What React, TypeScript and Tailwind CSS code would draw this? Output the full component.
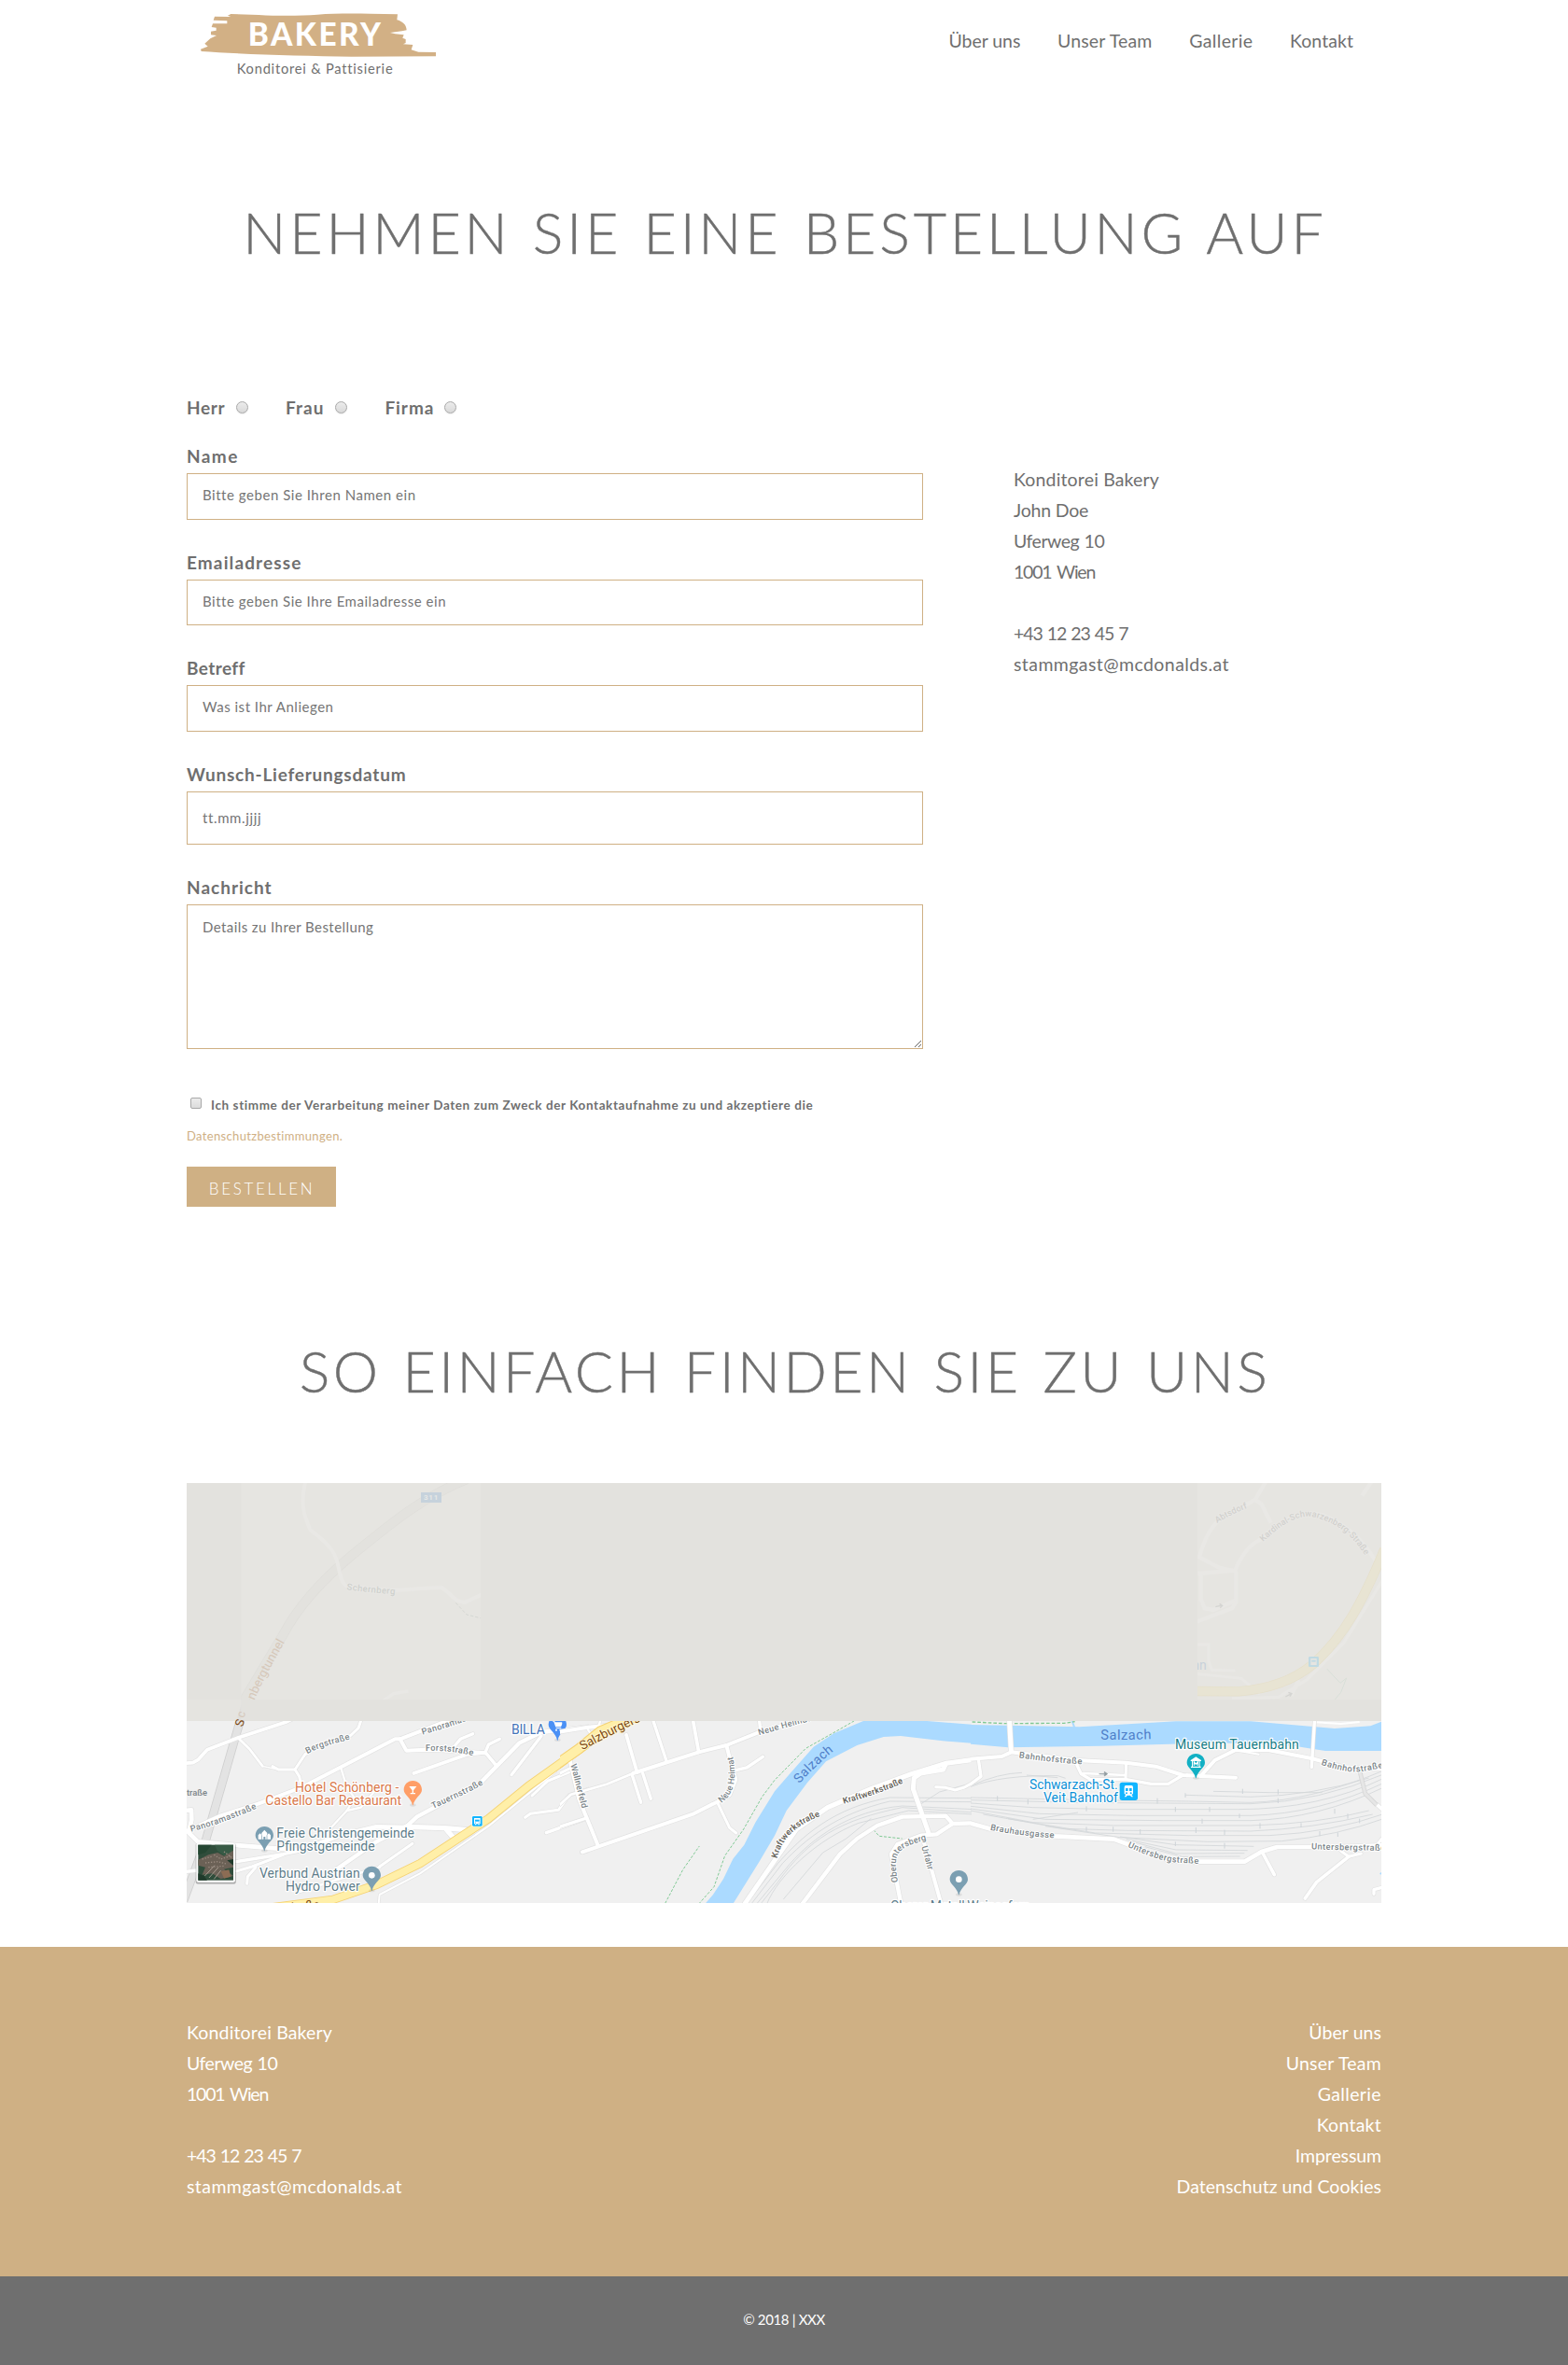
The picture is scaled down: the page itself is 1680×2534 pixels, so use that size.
import React from "react";

type Item = { text: string; track: string };

const NAV: Item[] = [
  { text: "Über uns", track: "tracking-[-0.05px]" },
  { text: "Unser Team", track: "tracking-[0.16px]" },
  { text: "Gallerie", track: "tracking-[0.33px]" },
  { text: "Kontakt", track: "tracking-[0.06px]" },
];

const CONTACT: Item[] = [
  { text: "Konditorei Bakery", track: "tracking-[0.16px]" },
  { text: "John Doe", track: "tracking-[-0.2px]" },
  { text: "Uferweg 10", track: "tracking-[-0.5px] [word-spacing:1px]" },
  { text: "1001 Wien", track: "tracking-[-1.2px] [word-spacing:2px]" },
  { text: "\u00a0", track: "" },
  { text: "+43 12 23 45 7", track: "tracking-[-1.1px] [word-spacing:1.2px]" },
  { text: "stammgast@mcdonalds.at", track: "tracking-[0.42px]" },
];

const FOOTER_LINKS: Item[] = [
  { text: "Über uns", track: "tracking-[0.05px]" },
  { text: "Unser Team", track: "tracking-[0.24px]" },
  { text: "Gallerie", track: "tracking-[0.35px]" },
  { text: "Kontakt", track: "tracking-[0.25px]" },
  { text: "Impressum", track: "tracking-[-0.1px]" },
  { text: "Datenschutz und Cookies", track: "tracking-[0.04px]" },
];

function Logo() {
  return (
    <svg className="h-[100px] w-[300px]" viewBox="0 0 900 300">
      <path
        fill="#d2b085"
        d="M162 50 L172 45 L262 48 C330 52 400 51 450 47 C500 43 560 43 620 44 L708 46 L706 64 C722 68 736 78 737 97 L722 100 L684 105 L700 109 L728 112 L724 122 L734 126 L734 138 L726 142 L757 144 L752 160 L775 167 L831 168 L831 181 L560 182 C400 180 200 174 77 165 L75 158 L98 149 L88 140 L106 124 L126 114 L108 112 L108 101 L125 98 L125 89 L110 87 L114 76 L160 76 L160 67 L116 65 L120 53 L172 54 Z"
      />
      <text x="227" y="147" fill="#fff" fontFamily="Lato" fontWeight="900" fontSize="100" textLength="427">
        BAKERY
      </text>
      <text className="[font-variant-ligatures:none]" x="191" y="238" fill="#6f6f6f" fontFamily="Lato" fontSize="44" textLength="501">
        Konditorei &amp; Pattisierie
      </text>
    </svg>
  );
}

function Radio({ label, track, gap }: { label: string; track: string; gap: string }) {
  return (
    <label className={"flex items-center " + gap}>
      <span className={"pt-px text-[19px] leading-[33px] font-bold " + track}>{label}</span>
      <input
        type="radio"
        name="anrede"
        className="size-[13px] appearance-none rounded-full border border-[#a8a8a8] bg-linear-to-b from-[#ececec] to-[#d9d9d9] shadow-[0_1px_1px_#00000014]"
      />
    </label>
  );
}

function Field({ label, track, children }: { label: string; track: string; children: React.ReactNode }) {
  return (
    <div className="mb-7 flex flex-col">
      <label className={"mb-[2px] pt-px text-[19px] leading-[33px] font-bold " + track}>{label}</label>
      {children}
    </div>
  );
}

const INPUT =
  "block w-full rounded-none border border-[#cfb084] bg-white px-[16px] pb-[3px] text-[15px] text-[#757575] placeholder:text-[#757575] outline-none";

/* Roads: light casing under a white core. */
function Roads({ items }: { items: [string, number][] }) {
  return (
    <g fill="none" strokeLinecap="round" strokeLinejoin="round">
      {items.map(([d, w], i) => (
        <path key={i} d={d} stroke="#e2e2e2" strokeWidth={w + 4} />
      ))}
      {items.map(([d, w], i) => (
        <path key={i} d={d} stroke="#fff" strokeWidth={w} />
      ))}
    </g>
  );
}

function Street({
  id,
  d,
  size = 28,
  fill = "#7b8488",
  halo = "#fff",
  weight = 500,
  spacing = 0,
  children,
}: {
  id: string;
  d: string;
  size?: number;
  fill?: string;
  halo?: string;
  weight?: number;
  spacing?: number;
  children: string;
}) {
  return (
    <>
      <path id={id} d={d} fill="none" />
      <text
        fontSize={size}
        fontWeight={weight}
        fill={fill}
        stroke={halo}
        strokeWidth={halo === "none" ? 0 : 6}
        strokeLinejoin="round"
        paintOrder="stroke"
        letterSpacing={spacing}
      >
        <textPath href={"#" + id}>{children}</textPath>
      </text>
    </>
  );
}

function Poi({ x, y, len, fill, children }: { x: number; y: number; len?: number; fill: string; children: string }) {
  return (
    <text
      x={x}
      y={y}
      fontSize="42"
      fill={fill}
      stroke="#fff"
      strokeWidth="7"
      strokeLinejoin="round"
      paintOrder="stroke"
      textLength={len}
    >
      {children}
    </text>
  );
}

function Pin({ x, y, fill, children }: { x: number; y: number; fill: string; children?: React.ReactNode }) {
  return (
    <g transform={`translate(${x} ${y})`}>
      <ellipse cx="0" cy="49" rx="10" ry="5" fill="#000" opacity=".08" />
      <path fill={fill} d="M0 -29 C17 -29 29 -16 29 0 C29 16 5 26 1 50 L-1 50 C-5 26 -29 16 -29 0 C-29 -16 -17 -29 0 -29 Z" />
      {children}
    </g>
  );
}

function BusStop({ x, y, fill }: { x: number; y: number; fill: string }) {
  return (
    <g transform={`translate(${x} ${y})`}>
      <rect x="-18" y="-18" width="36" height="36" rx="5" fill="#fff" opacity=".8" />
      <rect x="-16" y="-16" width="32" height="32" rx="4" fill={fill} />
      <path fill="#fff" d="M-10 -10 H10 V9 H7 V12 H3 V9 H-3 V12 H-7 V9 H-10 Z" />
      <rect x="-7" y="-5" width="14" height="6" fill={fill} />
      <rect x="-7" y="4" width="3" height="3" fill={fill} />
      <rect x="4" y="4" width="3" height="3" fill={fill} />
    </g>
  );
}

const WEST_ROADS: [string, number][] = [
  ["M20 928 L50 926 L66 917 L96 884 L195 846 L350 795 L380 780", 11],
  ["M195 846 L232 882 L274 937", 8],
  ["M306 938 L325 948 L378 948 L410 900 L440 876 L555 840 L582 815 L592 785", 9],
  ["M274 937 L325 948", 4],
  ["M378 948 L392 970 L398 1000", 9],
  ["M20 1150 L140 1096 L260 1058 L400 1005 L700 850 L716 850 L1000 740", 12],
  ["M716 850 L736 887 L800 884 L900 888 L990 895", 12],
  ["M760 960 L930 900 L990 893 L1025 935", 11],
  ["M990 893 L1000 868 L1036 850", 10],
  ["M893 870 L910 850 L950 833", 10],
  ["M525 940 L545 1005 L570 1040 L545 1080 L494 1135", 7],
  ["M545 1080 L590 1070 L640 1010", 7],
  ["M512 1268 L640 1180 L740 1128 L770 1100 L975 990 L1100 862 L1170 828 L1330 810", 13],
  ["M1170 840 L1074 965", 10],
  ["M650 1260 L756 1186", 9],
  ["M740 1132 L860 1136 L930 1142", 16],
  ["M866 1142 L888 1168", 16],
  ["M20 1080 L45 1078 L46 1110 L36 1150 L66 1180 L200 1192 L400 1208 L520 1160 L640 1132 L740 1134", 14],
  ["M190 1244 L340 1220 L400 1208", 10],
  ["M190 1275 L240 1260 L340 1222", 9],
  ["M224 1315 L226 1292 L252 1262", 9],
  ["M20 1277 L66 1272", 10],
  ["M395 1340 L520 1300 L650 1262", 8],
  ["M646 1390 L650 1350 L780 1282 L1000 1130 L1215 955", 6],
  ["M1140 1032 L1190 985 L1270 952", 9],
  ["M1118 1102 L1135 1090 L1225 1078 L1260 1030 L1330 1008", 9],
  ["M1186 1151 L1330 1100", 10],
  ["M1300 1214 L1335 1204", 10],
];

const MID_ROADS: [string, number][] = [
  ["M-10 108 L90 92 L180 84 L220 62", 12],
  ["M213 116 L248 238", 11],
  ["M232 246 L260 334", 10],
  ["M266 240 L292 322", 10],
  ["M300 72 L342 200", 10],
  ["M428 72 L446 172", 11],
  ["M640 64 L644 100", 10],
  ["M90 100 L110 130 L130 70", 7],
  ["M-10 245 L30 225", 9],
  ["M-10 350 L35 308 L150 275 L235 240", 8],
  ["M235 240 L446 172 L535 150 L640 108 L800 62", 12],
  ["M535 150 L545 190 L565 260 L545 310 L505 332 L430 370 L72 493", 12],
  ["M565 230 L600 222 L652 187", 10],
  ["M505 332 L545 415 L566 432", 9],
  ["M30 190 L60 320 L122 472", 12],
  ["M-10 415 L85 384", 10],
  ["M590 665 L690 520 L760 420 L860 350 L1000 290 L1130 242 L1240 208 L1330 196", 15],
  ["M1240 210 L1232 228 L1160 240 L1138 255 L1135 290 L1186 435", 15],
  ["M1208 284 L1240 286 L1270 294 L1300 285 L1330 268", 9],
  ["M775 665 L900 500 L955 450 L1020 408 L1100 380 L1240 377 L1262 402 L1330 400", 13],
  ["M1262 402 L1210 436 L1160 440 L1085 468 L1065 500 L1098 670", 13],
  ["M1165 445 L1228 670", 12],
];

const EAST_ROADS: [string, number][] = [
  ["M124 780 L130 888", 15],
  ["M-10 915 L100 906 L130 892 L340 918 L500 926 L595 938 L682 966 L724 968 L852 974", 12],
  ["M25 915 L33 970 L-10 1002", 10],
  ["M340 930 L355 962 L385 980 L500 980 L580 994 L635 994 L682 966", 10],
  ["M360 960 L498 966", 7],
  ["M500 930 L498 980", 9],
  ["M740 968 L785 918 L850 886 L960 886 L1095 912 L1200 940 L1330 946", 12],
  ["M850 886 L926 899", 6],
  ["M1106 780 L1096 940", 10],
  ["M-10 1118 L60 1138 L270 1162 L460 1172 L505 1188 L640 1240 L735 1244 L880 1244 L935 1212 L985 1197 L1190 1197 L1330 1192", 14],
  ["M938 1215 L976 1286", 11],
  ["M1190 1210 L1215 1228 L1255 1218", 9],
  ["M1215 1228 L1112 1310 L1075 1362", 11],
  ["M1296 1348 L1296 1334 L1330 1325", 10],
  ["M1305 1060 L1330 1082", 11],
  ["M1310 1185 L1330 1160", 9],
];

function MapView() {
  return (
    <svg className="block h-[450px] w-full" viewBox="0 0 1280 450" fontFamily="Roboto">
      <defs>
        <clipPath id="west"><rect x="30" y="792" width="1293" height="585" /></clipPath>
        <clipPath id="mid"><rect x="0" y="72" width="1323" height="585" /></clipPath>
        <clipPath id="east"><rect x="0" y="792" width="1320" height="585" /></clipPath>
        <clipPath id="tileW"><rect x="205" y="27" width="770" height="696" /></clipPath>
        <clipPath id="tileE"><rect x="729" y="27" width="591" height="696" /></clipPath>
      </defs>
      <rect width="1280" height="450" fill="#f0f0f0" />

      {/* west */}
      <g transform="translate(-10 -9) scale(.33333)" clipPath="url(#west)">
        <path d="M205 780 L90 1180 L20 1370" fill="none" stroke="#cfcfcf" strokeWidth="28" />
        <path d="M205 780 L90 1180 L20 1370" fill="none" stroke="#e3e3e3" strokeWidth="23" />
        <Roads items={WEST_ROADS} />
        <path d="M300 1392 L500 1366 L640 1318 L780 1250 L1000 1106 L1130 1000 L1340 850" fill="none" stroke="#f5d272" strokeWidth="28" />
        <path d="M300 1392 L500 1366 L640 1318 L780 1250 L1000 1106 L1130 1000 L1340 850" fill="none" stroke="#ffefa8" strokeWidth="23" />
        <Street id="w1" d="M418 898 C450 878 500 866 570 846" spacing={0.8}>Bergstraße</Street>
        <Street id="w2" d="M788 836 L860 815 L980 775" spacing={0.8}>Panoramastraße</Street>
        <Street id="w3" d="M798 888 C850 886 900 890 970 908" spacing={0.8}>Forststraße</Street>
        <Street id="w4" d="M822 1074 C870 1052 930 1025 995 990" spacing={1.2}>Tauernstraße</Street>
        <Street id="w5" d="M44 1148 C110 1132 180 1106 275 1064" spacing={1.2}>Panoramastraße</Street>
        <text x="30" y="1031" fontSize="28" fontWeight="500" fill="#7b8488">traße</text>
        <text x="366" y="1402" fontSize="40" fill="#7e4a12" transform="rotate(-4 366 1402)">traße</text>
        <Poi x={1074} y={834} len={108} fill="#4474b8">BILLA</Poi>
        <Pin x={1222} y={804} fill="#4a90f5">
          <path d="M-16 -12 h5 l6 17 h15 l4 -10" fill="none" stroke="#fff" strokeWidth="3.5" />
          <path d="M-9 -8 H15 L11 4 H-5 Z" fill="#fff" />
          <path d="M-5 11 h17" stroke="#fff" strokeWidth="3" />
          <circle cx="-4" cy="17" r="3" fill="#fff" />
          <circle cx="9" cy="17" r="3" fill="#fff" />
        </Pin>
        <Poi x={378} y={1020} len={334} fill="#d9784a">Hotel Schönberg -</Poi>
        <Poi x={283} y={1063} len={437} fill="#d9784a">Castello Bar Restaurant</Poi>
        <Pin x={757} y={1013} fill="#ff9e67">
          <path d="M-12 -11 H12 L2 2 V10 H8 V14 H-8 V10 H-2 V2 Z" fill="#fff" />
        </Pin>
        <Poi x={319} y={1167} len={443} fill="#5e7d8a">Freie Christengemeinde</Poi>
        <Poi x={319} y={1209} len={316} fill="#5e7d8a">Pfingstgemeinde</Poi>
        <Pin x={280} y={1160} fill="#7b9fb2">
          <path d="M-20 12 V-1 L-14 -7 L-9 -1 V-8 L0 -18 L9 -8 V-1 L14 -7 L20 -1 V12 H9 V-1 H7 V12 H3 V4 H-3 V12 H-7 V-1 H-9 V12 Z" fill="#fff" />
        </Pin>
        <Poi x={264} y={1296} len={323} fill="#5e7d8a">Verbund Austrian</Poi>
        <Poi x={348} y={1338} len={239} fill="#5e7d8a">Hydro Power</Poi>
        <Pin x={625} y={1288} fill="#7b9fb2"><circle r="10" fill="#fff" /></Pin>
        <BusStop x={964} y={1114} fill="#12b5ff" />
      </g>

      {/* centre */}
      <g transform="translate(400 231) scale(.33333)" clipPath="url(#mid)">
        <path
          fill="#abdaff"
          d="M466 660 L492 630 L525 580 L556 515 L592 470 L628 398 L690 298 L740 240 L815 155 L880 112 L975 72 L1180 72 L1330 84 L1330 144 L1230 136 L1095 120 L1040 123 L955 150 L855 202 L795 270 L728 360 L690 440 L640 525 L556 660 Z"
        />
        <path d="M446 660 L495 605 L530 505 L590 420 L650 315 L690 262 L790 160 L900 98 L945 72" fill="none" stroke="#81c995" strokeWidth="3" strokeDasharray="9 5" />
        <path d="M338 658 L395 550 L448 474" fill="none" stroke="#81c995" strokeWidth="3" strokeDasharray="9 5" />
        <path d="M1008 422 L1026 442 L1100 450" fill="none" stroke="#81c995" strokeWidth="3" strokeDasharray="9 5" />
        <g fill="none" stroke="#d3d6d9" strokeWidth="2.5">
          <path d="M600 660 L700 530 C780 440 880 350 1060 318 L1330 320" />
          <path d="M615 660 L715 530 C790 450 890 370 1060 330 L1330 332" />
          <path d="M632 660 L740 530 C810 450 930 360 1100 345 L1330 356" />
          <path d="M645 660 L700 590 C800 450 900 390 1100 350 L1330 366" />
          <path d="M665 660 C700 570 830 450 960 400 L1120 360 L1330 372" />
          <path d="M718 645 L845 495 L920 450 L1000 385" />
          <path d="M1150 345 L1220 300 L1330 270" />
        </g>
        <Roads items={MID_ROADS} />
        <path d="M-30 225 L60 162 L130 105 L260 50" fill="none" stroke="#f5d272" strokeWidth="34" />
        <path d="M-30 225 L60 162 L130 105 L260 50" fill="none" stroke="#ffefa8" strokeWidth="28" />
        <Street id="m1" d="M72 166 C120 140 180 108 270 68" size={40} fill="#7e4a12" weight={400} halo="#fff6cf">Salzburgerstraße</Street>
        <Street id="m2" d="M34 212 L74 366" spacing={0.4}>Wallnerfeld</Street>
        <Street id="m3" d="M640 118 L715 96 L850 60" spacing={0.8}>Neue Heimat</Street>
        <Street id="m4" d="M519 336 C558 306 574 262 551 165">Neue Heimat</Street>
        <Street id="m5" d="M770 274 C800 238 840 200 900 152" size={42} fill="#4f7fc9" weight={400} halo="none" spacing={1}>Salzach</Street>
        <Street id="m6" d="M698 514 C712 450 760 400 860 370" fill="#66635a" weight={600} size={28}>Kraftwerkstraße</Street>
        <Street id="m7" d="M912 338 C970 322 1050 298 1140 254" fill="#66635a" weight={600} size={28}>Kraftwerkstraße</Street>
        <Street id="m8" d="M1086 590 C1070 500 1076 480 1180 454">Oberuntersberg</Street>
        <Street id="m9" d="M1162 476 L1186 562">Urfahr</Street>
        <Pin x={1282} y={581} fill="#7b9fb2"><circle r="10" fill="#fff" /></Pin>
      </g>

      {/* east */}
      <g transform="translate(840 -9) scale(.33333)" clipPath="url(#east)">
        <path d="M0 804 L350 811 L660 793 L900 793 L1170 816 L1285 808 L1330 790 L1330 888 L1140 888 L1040 872 L800 862 L420 872 L120 877 L0 866 Z" fill="#abdaff" />
        <path d="M326 792 L334 814" stroke="#abdaff" strokeWidth="6" />
        <path d="M5 795 L110 800 L300 799 L335 794" fill="none" stroke="#81c995" strokeWidth="4" strokeDasharray="11 6" />
        <path d="M1110 796 L1190 801 L1250 795" fill="none" stroke="#fff" strokeWidth="6" />
        <g fill="none" stroke="#d3d6d9" strokeWidth="2.5">
          <path d="M0 1000 Q90 960 165 958" />
          <path d="M0 1003 Q100 965 280 968 L305 976" />
          <path d="M180 966 L280 974" />
          <path d="M0 1038 L400 1046 L700 1050 L900 1054 Q1100 1048 1330 950" />
          <path d="M0 1046 L350 1054 L600 1056 L900 1058 Q1120 1052 1330 962" />
          <path d="M0 1056 L200 1070 L460 1076 L860 1076 Q1120 1076 1330 975" />
          <path d="M0 1066 L220 1090 L520 1096 L900 1096 Q1120 1090 1330 990" />
          <path d="M0 1074 L240 1108 L620 1112 L900 1112 Q1120 1106 1330 1004" />
          <path d="M0 1080 L200 1118 L460 1128 L900 1128 Q1120 1122 1280 1080" />
          <path d="M40 1092 L300 1138 L500 1144 L900 1146 Q1100 1138 1292 1092" />
          <path d="M120 1106 L400 1152 L700 1160 L960 1160 Q1160 1150 1330 1090" />
          <path d="M240 1130 L480 1166 L760 1180 L1000 1178 Q1180 1160 1330 1105" />
          <path d="M480 1164 L660 1190 L910 1195" />
          <path d="M500 1172 L660 1206 L890 1208" />
          <path d="M520 1180 L660 1218 L880 1217" />
          <path d="M560 1196 L680 1228 L866 1227" />
          <path d="M690 1030 L900 1036 Q1100 1032 1280 975" />
          <path d="M780 1018 L960 1022 L1130 1022" />
          <path d="M200 1108 L345 1086" />
        </g>
        <path
          d="M86 1033 v16 M184 1044 v16 M372 1066 v16 M372 1132 v14 M458 1132 v16 M545 1140 v16 M600 1040 v18 M658 1068 v16 M658 1180 v14 M744 1106 v16 M768 1068 v16 M816 1142 v16 M864 1090 v14 M930 1120 v18 M988 1012 v16 M988 1040 v16 M1062 1120 v14 M1122 1146 v16 M1170 1074 v16 M1180 1150 v14 M1212 1090 v16 M874 1010 v16 M690 1024 v14 M724 1134 v18 M816 1184 v18 M1250 1106 v14"
          stroke="#cdd3d8"
          strokeWidth="3"
        />
        <Roads items={EAST_ROADS} />
        <path d="M1250 950 L1268 1025 L1305 1062" fill="none" stroke="#d6d6d6" strokeWidth="14" />
        <path d="M1250 950 L1268 1025 L1305 1062" fill="none" stroke="#e6e6e6" strokeWidth="9" />
        <path d="M413 962 H430 V955 L440 962 L430 969 V963 Z" fill="#909a9f" stroke="#909a9f" strokeWidth="2" />
        <path d="M1316 1284 L1330 1274" stroke="#abdaff" strokeWidth="5" />
        <Street id="e1" d="M418 852 L500 852 L600 849" size={44} fill="#4f7fc9" weight={400} halo="none" spacing={1.5}>Salzach</Street>
        <Street id="e2" d="M155 910 C220 920 300 928 375 932" spacing={1.5}>Bahnhofstraße</Street>
        <Street id="e3" d="M1126 932 C1180 950 1220 960 1260 954 L1350 938" spacing={1.5}>Bahnhofstraße</Street>
        <Street id="e4" d="M62 1142 C130 1156 200 1164 290 1170" spacing={1.2}>Brauhausgasse</Street>
        <Street id="e5" d="M504 1196 C560 1222 620 1246 680 1248 L770 1253" spacing={1.2}>Untersbergstraße</Street>
        <Street id="e6" d="M1095 1204 L1200 1207 L1360 1209" spacing={1.2}>Untersbergstraße</Street>
        <Poi x={657} y={882} len={398} fill="#167d87">Museum Tauernbahn</Poi>
        <Pin x={724} y={926} fill="#12b0c4">
          <path d="M-17 -8 L0 -19 L17 -8 V-5 H-17 Z M-13 -5 H-10 V12 H-13 Z M10 -5 H13 V12 H10 Z M-16 12 H16 V16 H-16 Z" fill="#fff" />
          <path d="M-6 9 V-3 L0 5 L6 -3 V9" fill="none" stroke="#fff" strokeWidth="3.5" />
        </Pin>
        <Poi x={234} y={1053} len={240} fill="#0a8fd6">Veit Bahnhof</Poi>
        <Poi x={189} y={1011} len={284} fill="#0a8fd6">Schwarzach-St.</Poi>
        <g transform="translate(508 1018)">
          <rect x="-29" y="-29" width="58" height="58" rx="8" fill="#12b5ff" />
          <path fill="#fff" d="M-9 -19 H9 Q14 -19 14 -13 V8 L9 11 L14 18 H8 L5 13 H-5 L-8 18 H-14 L-9 11 L-14 8 V-13 Q-14 -19 -9 -19 Z" />
          <rect x="-10" y="-10" width="8" height="9" fill="#12b5ff" />
          <rect x="2" y="-10" width="8" height="9" fill="#12b5ff" />
          <circle cx="-7" cy="6" r="3" fill="#12b5ff" />
          <circle cx="7" cy="6" r="3" fill="#12b5ff" />
        </g>
      </g>
      <g transform="translate(400 231) scale(.33333)">
        <Poi x={1062} y={680} len={448} fill="#5e7d8a">Oberer Metall Weinasfern</Poi>
      </g>

      {/* tiles that are still fading in */}
      <rect width="1280" height="255" fill="#e3e2de" />
      <g transform="translate(-10 -9) scale(.33333)">
        <rect x="30" y="723" width="175" height="69" fill="#e5e4e0" />
        <path d="M190 792 L205 740 V792 Z" fill="#dfdedb" />
        <g clipPath="url(#tileW)">
          <rect x="205" y="27" width="770" height="696" fill="#e6e5e1" />
          <g fill="none">
            <path d="M205 740 L340 515 C400 400 500 310 560 260 C660 180 770 80 930 15" stroke="#dfdeda" strokeWidth="31" />
            <path d="M205 740 L340 515 C400 400 500 310 560 260 C660 180 770 80 930 15" stroke="#e3e2de" strokeWidth="27" />
            <path d="M412 20 C395 90 405 130 428 178 C470 210 505 240 515 285 C525 330 530 355 548 360 L690 372 C760 370 800 362 850 364 C880 380 890 412 925 410 L980 385" stroke="#e9e8e5" strokeWidth="12" />
            <path d="M660 728 L695 704 L742 696" stroke="#e9e8e5" strokeWidth="10" />
            <path d="M895 412 L930 450 L978 462" stroke="#d5d7d3" strokeWidth="3" strokeDasharray="10 6" />
          </g>
          <rect x="783" y="57" width="66" height="33" fill="#c6d2dc" />
          <text x="792" y="81" fontSize="24" fontWeight="700" fill="#e8e8e6" textLength="46">311</text>
          <Street id="t1" d="M544 370 C600 377 650 382 720 386" fill="#cfd1cd" halo="#e9e8e5" size={29} spacing={0.8}>Schernberg</Street>
        </g>
        <Street id="t2" d="M248 726 C270 670 310 600 356 520" fill="#d6c8ba" halo="none" weight={400} size={40}>nbergtunnel</Street>
        <text transform="translate(210 812) rotate(-74)" fontSize="38" fill="#7e4a12">S</text>
        <text transform="translate(214 784) rotate(-72)" fontSize="38" fill="#d6c8ba">c</text>
      </g>
      <g transform="translate(840 -9) scale(.33333)" clipPath="url(#tileE)">
        <rect x="729" y="27" width="591" height="696" fill="#e6e5e1" />
        <g fill="none" stroke="#e9e8e5" strokeWidth="13">
          <path d="M950 20 L915 80 L800 145 C770 170 750 210 735 265 L800 300 L850 310" />
          <path d="M915 80 L935 95 L965 155" />
          <path d="M1290 20 L1258 68" />
          <path d="M730 318 L850 308 C870 260 900 220 940 205 C990 150 1060 110 1130 130 C1210 160 1260 210 1300 275" />
          <path d="M853 310 V410 L840 430 L720 475" />
          <path d="M740 320 V400 L752 430 L780 435 L850 405" />
          <path d="M725 546 L765 546 L765 600 L775 628 L850 630" strokeWidth="9" />
          <path d="M725 640 L870 655 L930 705" strokeWidth="9" />
          <path d="M840 720 L990 715 L1080 660 L1200 540 L1330 330" strokeWidth="10" />
          <path d="M1030 710 L1055 660" />
        </g>
        <path d="M725 696 L860 697 C960 690 1040 660 1100 610 C1200 520 1260 410 1330 240" fill="none" stroke="#e5dfca" strokeWidth="31" />
        <path d="M725 696 L860 697 C960 690 1040 660 1100 610 C1200 520 1260 410 1330 240" fill="none" stroke="#e8e4d3" strokeWidth="27" />
        <path d="M787 425 L808 420 M800 415 L809 421 L802 428 M1012 714 L1031 704 M1021 700 L1032 704 L1026 713" fill="none" stroke="#d5d5d2" strokeWidth="4" />
        <path d="M1145 624 L1188 670 L1208 654 L1190 700 L1170 724" fill="none" stroke="#d8dfd8" strokeWidth="3" />
        <Street id="t4" d="M792 156 C830 132 860 118 920 96" fill="#d2d1ce" halo="#e9e8e5">Abtsdorf</Street>
        <Street id="t5" d="M940 216 C1010 150 1060 125 1110 138 C1190 162 1235 200 1282 285" fill="#d2d1ce" halo="#e9e8e5" size={28}>Kardinal-Schwarzenberg-Straße</Street>
        <text x="712" y="627" fontSize="42" fill="#c8d1da">nn</text>
        <rect x="1086" y="585" width="33" height="33" rx="4" fill="#c0dae3" />
        <path fill="#e6e5e1" d="M1093 591 H1112 V612 H1093 Z" />
        <rect x="1096" y="596" width="13" height="6" fill="#c0dae3" />
      </g>

      {/* satellite toggle */}
      <g transform="translate(-10 -9) scale(.33333)">
        <rect x="58" y="1184" width="131" height="131" rx="8" fill="#000" opacity=".12" />
        <rect x="60" y="1188" width="128" height="128" rx="6" fill="#000" opacity=".18" />
        <rect x="61" y="1184" width="125" height="126" rx="6" fill="#fff" />
        <rect x="67" y="1190" width="113" height="114" fill="#2f4d3b" />
        <path d="M67 1190 H110 L90 1215 L67 1222 Z" fill="#244632" />
        <path d="M120 1190 H180 V1212 L150 1225 L128 1208 Z" fill="#375a45" />
        <path d="M67 1238 L100 1222 L130 1215 L150 1226 L180 1208 V1262 L150 1268 L180 1290 L140 1300 L112 1282 L80 1286 L90 1262 L67 1256 Z" fill="#6b6156" />
        <path d="M80 1236 L110 1228 M118 1222 L140 1236 L170 1226 M90 1248 L130 1244 L160 1252 M150 1212 L176 1232 M100 1262 L150 1258" stroke="#9a8b80" strokeWidth="4" strokeDasharray="4 5" fill="none" />
        <path d="M88 1290 L120 1256 M102 1296 L132 1262 M118 1300 L140 1272" stroke="#b3a79b" strokeWidth="2.5" fill="none" />
        <path d="M140 1275 L166 1270 L172 1292 L150 1298 Z" fill="#8c6c54" />
        <path d="M67 1282 L86 1290 L96 1304 H67 Z M160 1240 L180 1236 V1256 Z" fill="#1f3a2b" />
      </g>
    </svg>
  );
}

export default function App() {
  return (
    <div className="flex min-h-[2534px] flex-col bg-white font-['Lato',sans-serif] text-[#6f6f6f]">
      <header className="mx-auto flex h-[100px] w-[1280px] justify-between pr-[30px]">
        <div className="-ml-[10px]">
          <Logo />
        </div>
        <nav className="flex gap-[39.7px] pt-[27px] text-[19.5px] leading-[33px]">
          {NAV.map((n) => (
            <a key={n.text} href="#" className={n.track}>
              {n.text}
            </a>
          ))}
        </nav>
      </header>

      <h1 className="mt-[109px] pl-[2px] text-center text-[61px] leading-[80px] font-light tracking-[3.8px] [word-spacing:3px] [-webkit-text-stroke:0.4px_#6f6f6f]">
        NEHMEN SIE EINE BESTELLUNG AUF
      </h1>

      <main className="mx-auto mt-[130px] flex w-[1280px] justify-between">
        <form className="w-[789px]">
          <div className="mb-[18px] flex gap-[40.5px]">
            <Radio label="Herr" track="tracking-[0.6px]" gap="gap-[11.5px]" />
            <Radio label="Frau" track="tracking-[1px]" gap="gap-[11.5px]" />
            <Radio label="Firma" track="tracking-[0.95px]" gap="gap-[11px]" />
          </div>
          <Field label="Name" track="tracking-[1.4px]">
            <input className={INPUT + " h-[49.6px] tracking-[0.535px]"} placeholder="Bitte geben Sie Ihren Namen ein" />
          </Field>
          <Field label="Emailadresse" track="tracking-[1.12px]">
            <input className={INPUT + " h-[49.6px] tracking-[0.528px]"} placeholder="Bitte geben Sie Ihre Emailadresse ein" />
          </Field>
          <Field label="Betreff" track="tracking-[0.4px]">
            <input className={INPUT + " h-[49.6px] tracking-[0.51px]"} placeholder="Was ist Ihr Anliegen" />
          </Field>
          <Field label="Wunsch-Lieferungsdatum" track="tracking-[0.78px]">
            <input className={INPUT + " h-[57px] pb-px tracking-[0.62px]"} placeholder="tt.mm.jjjj" />
          </Field>
          <Field label="Nachricht" track="tracking-[1px]">
            <textarea
              className={INPUT + " h-[155px] resize pt-[12px] leading-[22px] tracking-[0.42px]"}
              placeholder="Details zu Ihrer Bestellung"
            />
          </Field>
          <div className="mt-[44.2px] leading-[33px]">
            <label className="flex h-[33px] items-center gap-[10px] pl-[4px] text-[13.5px] font-bold tracking-[0.6px] whitespace-nowrap">
              <input
                type="checkbox"
                className="-mt-[4px] size-[12px] appearance-none rounded-[2px] border border-[#a8a8a8] bg-linear-to-b from-[#ececec] to-[#dcdcdc]"
              />
              Ich stimme der Verarbeitung meiner Daten zum Zweck der Kontaktaufnahme zu und akzeptiere die
            </label>
            <a href="#" className="block text-[13px] tracking-[0.34px] text-[#cfb084]">
              Datenschutzbestimmungen.
            </a>
          </div>
          <button
            type="button"
            className="mt-[16px] block h-[43px] w-[160px] bg-[#cfb084] pt-[4px] pl-px text-center text-[17px] font-light tracking-[2.7px] text-white"
          >
            BESTELLEN
          </button>
        </form>
        <address className="w-[394px] pt-[78px] text-[19.5px] leading-[33px] not-italic">
          {CONTACT.map((c) => (
            <p key={c.text} className={c.track}>
              {c.text}
            </p>
          ))}
        </address>
      </main>

      <h2 className="mt-[136px] pl-[2px] text-center text-[61px] leading-[80px] font-light tracking-[3.4px] [word-spacing:3px] [-webkit-text-stroke:0.4px_#6f6f6f]">
        SO EINFACH FINDEN SIE ZU UNS
      </h2>

      <section className="mx-auto mt-[80px] w-[1280px]">
        <MapView />
      </section>

      <footer className="mt-[47px] flex grow flex-col">
        <div className="h-[353px] bg-[#cfb084] text-white">
          <div className="mx-auto flex w-[1280px] justify-between pt-[75px] text-[19.5px] leading-[33px]">
            <address className="not-italic">
              {CONTACT.filter((c) => c.text !== "John Doe").map((c) => (
                <p key={c.text} className={c.track}>
                  {c.text}
                </p>
              ))}
            </address>
            <ul className="text-right">
              {FOOTER_LINKS.map((l) => (
                <li key={l.text} className={l.track}>
                  {l.text}
                </li>
              ))}
            </ul>
          </div>
        </div>
        <div className="grow bg-[#6f6f6f] pt-[30px] text-center text-[15px] leading-[33px] tracking-[-0.34px] text-white">
          © 2018 | XXX
        </div>
      </footer>
    </div>
  );
}
